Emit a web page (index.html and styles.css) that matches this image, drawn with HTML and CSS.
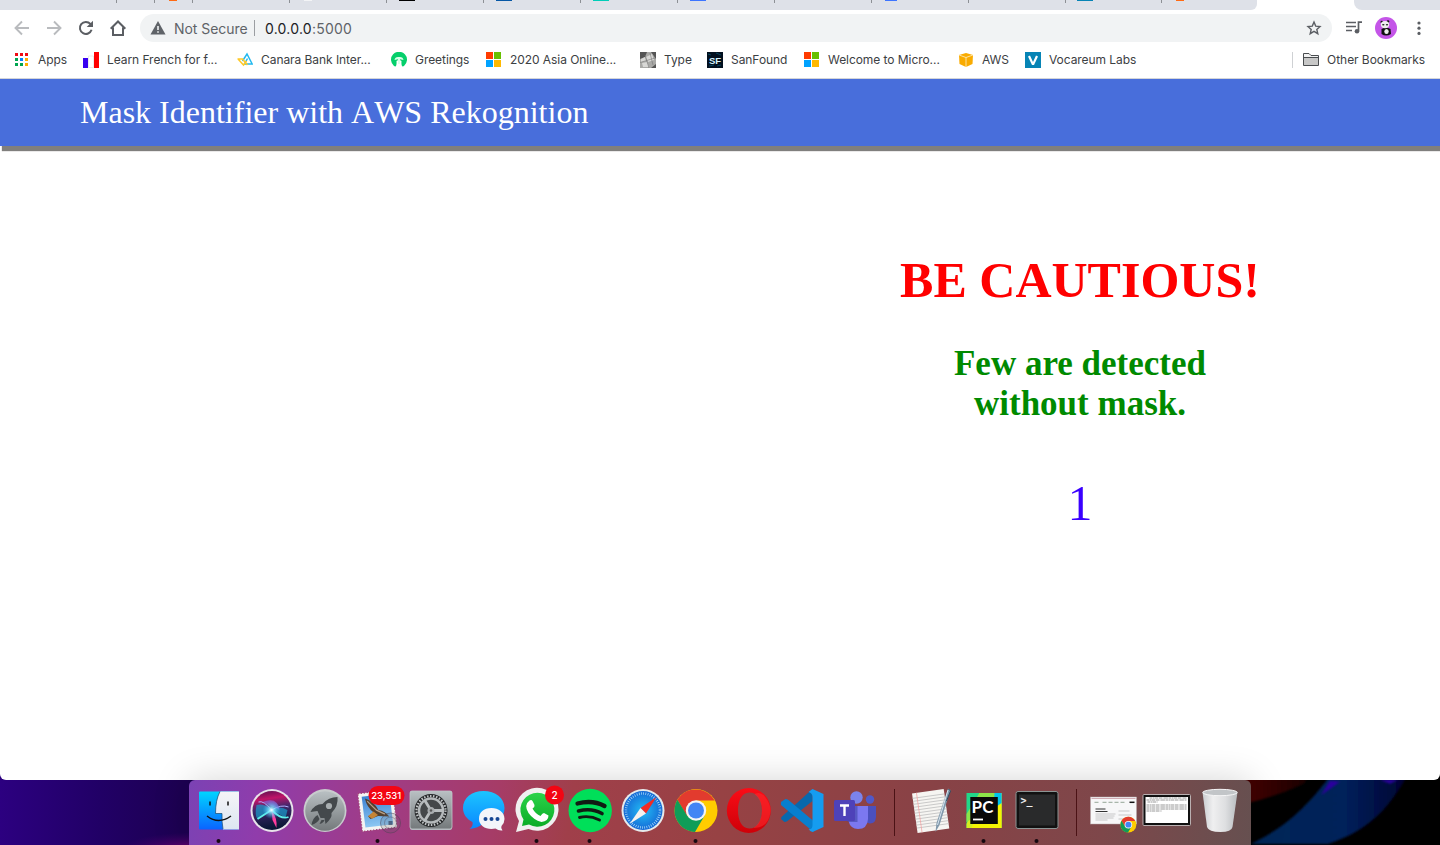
FILE: index.html
```html
<!DOCTYPE html>
<html lang="en">
<head>
<meta charset="utf-8">
<title>Mask Identifier</title>
<link rel="stylesheet" href="styles.css">
</head>
<body>
<svg class="wallpaper" viewBox="0 0 1440 75" preserveAspectRatio="none">
  <defs>
    <linearGradient id="wl" x1="0" x2="1"><stop offset="0" stop-color="#2c0080"/><stop offset=".25" stop-color="#210066"/><stop offset=".45" stop-color="#1d0052"/><stop offset="1" stop-color="#1d0048"/></linearGradient>
    <radialGradient id="wm"><stop offset="0" stop-color="#820078" stop-opacity=".9"/><stop offset="1" stop-color="#500070" stop-opacity="0"/></radialGradient>
    <linearGradient id="wr" x1="0" x2="1"><stop offset="0" stop-color="#4a0000"/><stop offset="1" stop-color="#180000"/></linearGradient>
    <linearGradient id="wb" x1="0" x2="1" y1="0" y2="0"><stop offset="0" stop-color="#002858"/><stop offset=".6" stop-color="#00205a"/><stop offset="1" stop-color="#020030"/></linearGradient>
    <filter id="soft"><feGaussianBlur stdDeviation="1.2"/></filter>
  </defs>
  <rect width="1440" height="75"/>
  <rect width="400" height="75" fill="url(#wl)"/>
  <ellipse cx="195" cy="80" rx="75" ry="18" fill="url(#wm)"/>
  <path d="M1240 0H1310L1304 12Q1275 26 1240 34z" fill="url(#wr)" filter="url(#soft)"/>
  <path d="M1333 0C1308 35 1288 55 1251 74H1328C1370 60 1392 34 1409 0z" fill="url(#wb)" filter="url(#soft)"/>
  <path d="M1330 9L1321 24L1340 10zM1380 8L1390 12L1398 8z" fill="#2c009e" filter="url(#soft)"/>
</svg>
<div class="window">
  <div class="tabs">
    <span class="tab t117"></span><span class="tab t38"></span><span class="tab t38"><i class="fav f-orange"></i></span>
    <span class="tab"></span><span class="tab"><i class="fav f-white"></i></span><span class="tab"><i class="fav f-black"></i></span><span class="tab"><i class="fav f-navy"></i></span>
    <span class="tab"><i class="fav f-teal"></i></span><span class="tab"><i class="fav f-blue"></i></span><span class="tab"></span>
    <span class="tab"><i class="fav f-blue f-small"></i></span><span class="tab"></span>
    <span class="tab t96"><i class="fav f-cyan"></i></span><span class="tab t95"><i class="fav f-orange"></i></span>
    <span class="active"></span><span class="rest"></span>
  </div>
  <div class="toolbar">
    <svg class="tool" viewBox="0 0 16 16" fill="none" stroke="#b9bbbe" stroke-width="1.9"><path d="M15 8H2M8 1.5L1.5 8L8 14.5"/></svg>
    <svg class="tool" viewBox="0 0 16 16" fill="none" stroke="#b9bbbe" stroke-width="1.9"><path d="M1 8H14M8 1.5L14.500 8L8 14.500"/></svg>
    <svg class="tool" viewBox="0 0 16 16"><path d="M13.6 9.800A6 6 0 1 1 12.4 3.900L14 5.500" fill="none" stroke="#5b5e63" stroke-width="2"/><path d="M15 .7V7H8.700z" fill="#5b5e63"/></svg>
    <svg class="tool" viewBox="0 0 16 16" fill="none" stroke="#5b5e63" stroke-width="2"><path d="M.7 8.700L8 1.500L15.300 8.700M3 7.500V15H13V7.500"/></svg>
    <div class="omnibox">
      <svg class="warn" viewBox="0 0 16 14"><path d="M8 0L15.500 13.500H.5z" fill="#5f6368"/><path d="M7.200 5h1.600v4H7.200zM7.200 10.200h1.600v1.600H7.200z" fill="#f1f3f4"/></svg>
      <span class="insecure">Not Secure</span><span class="bar"></span><span class="url">0.0.0.0<em>:5000</em></span>
      <svg class="star" viewBox="0 0 16 16" fill="none" stroke="#5b5e63" stroke-width="1.400"><path d="M8 2L9.700 6.100L14 6.500L10.800 9.400L11.800 13.700L8 11.400L4.200 13.700L5.200 9.400L2 6.500L6.300 6.100z"/></svg>
    </div>
    <svg class="media" viewBox="0 0 16 14"><path d="M0 1.500h10M0 5.500h10M0 9.500h6" stroke="#5b5e63" stroke-width="1.600"/><path d="M12.500 10V1.200H16" fill="none" stroke="#5b5e63" stroke-width="1.700"/><circle cx="11" cy="10.200" r="2.300" fill="#5b5e63"/></svg>
    <svg class="avatar" viewBox="0 0 22 22"><circle cx="11" cy="11" r="11" fill="#c455e8"/><circle cx="6.800" cy="5" r="1.300" fill="#111"/><circle cx="13" cy="4.600" r="1.300" fill="#111"/><path d="M6.500 12Q11 9 15.500 12L16 17Q11 20 6.500 17z" fill="#111"/><ellipse cx="10" cy="7.600" rx="4.200" ry="3.600" fill="#eee"/><ellipse cx="8.300" cy="7.800" rx="1.200" ry=".8" fill="#222"/><ellipse cx="12" cy="7.800" rx="1.200" ry=".8" fill="#222"/><ellipse cx="11.500" cy="14.500" rx="2.200" ry="2.600" fill="#eee"/></svg>
    <svg class="dots" viewBox="0 0 4 14" fill="#5b5e63"><circle cx="2" cy="2" r="1.600"/><circle cx="2" cy="7.200" r="1.600"/><circle cx="2" cy="12.400" r="1.600"/></svg>
  </div>
  <div class="bookmarks">
    <div class="bm w69"><svg viewBox="0 0 16 16"><path d="M1 1h3v3H1zM6 1h3v3H6zM11 1h3v3h-3z" fill="#f00a14"/><path d="M1 6h3v3H1zM1 11h3v3H1z" fill="#00a550"/><path d="M6 6h3v3H6z" fill="#0082ff"/><path d="M11 6h3v3h-3zM11 11h3v3h-3z" fill="#ffac00"/><path d="M6 11h3v3H6z" fill="#00a550"/></svg><span>Apps</span></div>
    <div class="bm"><svg viewBox="0 0 16 16"><path d="M0 6h5v10H0z" fill="#3700f0"/><path d="M5.500 4h5v11.500h-5z" fill="#fff" stroke="#ddd" stroke-width=".6"/><path d="M11 0h5v16h-5z" fill="#f00"/></svg><span>Learn French for f...</span></div>
    <div class="bm"><svg viewBox="0 0 16 16" fill="none" stroke-width="1.500"><path d="M5.500 9L10 2L15.200 12H7.500L10.500 6.500" stroke="#22b9ef"/><path d="M.5 7H5.500L10.500 13M1 7L6.500 13L9.500 9" stroke="#ffc928"/></svg><span>Canara Bank Inter...</span></div>
    <div class="bm w95"><svg viewBox="0 0 16 16"><path d="M3 14A8 8 0 1 1 13 14Q10 16 10.500 9Q8 7 5.500 9Q6 16 3 14z" fill="#05cf6b"/><path d="M3.500 8Q4 4.500 8 5Q12 4.500 12.500 8L9 7.300L8.800 12H7.200L7 7.300z" fill="#d9ffe9"/></svg><span>Greetings</span></div>
    <div class="bm"><svg viewBox="0 0 16 16"><path d="M0 0h7v7H0z" fill="#ff3b00"/><path d="M8 0h7v7H8z" fill="#68c000"/><path d="M0 8h7v7H0z" fill="#00a2ff"/><path d="M8 8h7v7H8z" fill="#ffb900"/></svg><span>2020 Asia Online...</span></div>
    <div class="bm w67"><svg viewBox="0 0 16 16"><rect width="16" height="16" fill="#a9a9a7"/><path d="M0 0H7L5 5L0 7zM11 0H16V7zM16 12V16H11z" fill="#555"/><path d="M1 7L5 5L6 9L1 10zM6 5L12 2L14 8L8 10zM2 11L7 10L9 15H3z" fill="#d8d8d6"/><path d="M0 10.500L15 6M5 3L9 16M10 1L13 13" stroke="#777" stroke-width=".6"/></svg><span>Type</span></div>
    <div class="bm w97"><svg viewBox="0 0 16 16"><rect width="16" height="16" fill="#02101f"/><path d="M1 2l3 1M9 1l5 2M2 14l5-1M10 14l4-1" stroke="#07506d" stroke-width=".8"/><text x="8" y="11.600" text-anchor="middle" class="sf">SF</text></svg><span>SanFound</span></div>
    <div class="bm"><svg viewBox="0 0 16 16"><path d="M0 0h7v7H0z" fill="#ff3b00"/><path d="M8 0h7v7H8z" fill="#68c000"/><path d="M0 8h7v7H0z" fill="#00a2ff"/><path d="M8 8h7v7H8z" fill="#ffb900"/></svg><span>Welcome to Micro...</span></div>
    <div class="bm w67"><svg viewBox="0 0 16 16"><path d="M1 3L8 1L15 3L14.500 12L8 15L1.500 12z" fill="#f9ab00"/><path d="M1 3L8 5.500L15 3M8 5.500V15" fill="none" stroke="#fff0c8" stroke-width=".8"/></svg><span>AWS</span></div>
    <div class="bm"><svg viewBox="0 0 16 16"><rect width="16" height="16" fill="#0784b5"/><path d="M3 4.500L5 3.500L8 10L11 3.500L13 4.500L9 13H7z" fill="#fff"/></svg><span>Vocareum Labs</span></div>
    <div class="bm other"><svg viewBox="0 0 16 16"><path d="M.5 13.500V1.500H6L8 3.500H15.500V13.500z" fill="#f2f2f2" stroke="#4a4d50"/><path d="M1 6H15V13H1z" fill="#c7c7c7"/><path d="M.5 5.500H15.500" stroke="#4a4d50"/></svg><span>Other Bookmarks</span></div>
  </div>
  <header class="banner">Mask Identifier with AWS Rekognition</header>
  <main class="page">
    <section class="result">
      <h1>BE CAUTIOUS!</h1>
      <h2>Few are detected<br>without mask.</h2>
      <p>1</p>
    </section>
  </main>
</div>
<div class="dock">
  <svg class="app" viewBox="-26.5 0 53 65">
    <defs><linearGradient id="fb" x2="0" y2="1"><stop stop-color="#00d5ff"/><stop offset="1" stop-color="#0a64ff"/></linearGradient><linearGradient id="fw" x2="0" y2="1"><stop stop-color="#f5f5f7"/><stop offset="1" stop-color="#dce6f2"/></linearGradient></defs>
    <rect x="-19.500" y="11.500" width="40" height="38" rx="1" fill="url(#fb)"/><path d="M1.500 11.500H20.500V49.500H4.500Q3.200 42 3.500 33.500H-3Q-3 20 1.500 11.500z" fill="url(#fw)"/>
    <path d="M1.500 11.500Q-3 20-3 33.500H3.500Q3.200 42 4.500 49" fill="none" stroke="#16476e" stroke-width=".7"/><path d="M-8.500 21.500v4M9.500 21.500v4" stroke="#111" stroke-width="1.500"/><path d="M-11.500 36Q0 45 12.500 36" fill="none" stroke="#111" stroke-width="1.500"/><circle class="run" cy="61" r="2"/>
  </svg>
  <svg class="app" viewBox="-26.5 0 53 65">
    <defs><radialGradient id="sc"><stop stop-color="#fff"/><stop offset=".3" stop-color="#8ceaff" stop-opacity=".8"/><stop offset="1" stop-color="#3bf" stop-opacity="0"/></radialGradient><linearGradient id="sb" x2=".15" y2="1"><stop offset="0" stop-color="#50104f"/><stop offset=".25" stop-color="#c01468"/><stop offset=".5" stop-color="#40286c"/><stop offset="1" stop-color="#0a1836"/></linearGradient></defs>
    <circle cx=".5" cy="30.500" r="21.500" fill="#e8e3ea"/><circle cx=".5" cy="30.500" r="19.500" fill="url(#sb)"/>
    <path d="M0 30Q-8 23-15 25Q-17 36-14 39zM0 30Q8 25 16 30L14 38Q8 34 0 30" fill="#16a8d4" opacity=".65"/><path d="M0 30L-14 39M0 30Q10 40 17 37" stroke="#5ff0e8" stroke-width="1.800" fill="none"/><path d="M0 30Q-8 20-13 22M0 30Q10 24 17 27" stroke="#b6b0ff" stroke-width="1" fill="none"/><path d="M0 30Q6 38 5 48L1 40z" fill="#ff3d9c"/><path d="M-9 22Q6 16 8 30" fill="#8a72e8" opacity=".6"/><circle cx="0" cy="30" r="9" fill="url(#sc)"/>
  </svg>
  <svg class="app" viewBox="-26.5 0 53 65">
    <defs><linearGradient id="gr" x2="0" y2="1"><stop stop-color="#b9c0c3"/><stop offset="1" stop-color="#74797b"/></linearGradient></defs>
    <circle cx=".5" cy="30.500" r="21.500" fill="#c8cccd"/><circle cx=".5" cy="31" r="19.800" fill="url(#gr)"/>
    <path d="M13 17Q4 17-2 24Q-10 24-14 32L-7 31L-4 38L0 38L1 44Q8 38 7 33Q14 26 13 17z" fill="#44494c"/><circle cx="4.500" cy="26" r="3.100" fill="#a8aeb0"/><path d="M-7 35Q-12 38-13 45Q-7 43-5 39zM-3 40L-5 44Q-1 43 0 40z" fill="#44494c"/>
  </svg>
  <svg class="app" viewBox="-26.5 0 53 65">
    <defs><linearGradient id="ml" x2="0" y2="1"><stop stop-color="#3c82d2"/><stop offset="1" stop-color="#8dc7f2"/></linearGradient></defs>
    <g transform="rotate(-7 0 31)"><rect x="-17.500" y="11.500" width="35" height="38" fill="#f4f4f2"/><rect x="-17.500" y="11.500" width="35" height="38" fill="none" stroke="#a34073" stroke-width="1.200" stroke-dasharray="1.300 1.700"/><rect x="-14" y="15" width="28" height="31" fill="url(#ml)"/><path d="M-11 17Q-3 20 1 30Q8 32 11 38Q5 37 0 36L-8 38L-10 35L-4 32Q-10 26-11 17z" fill="#54402e"/><path d="M-10 35L-4 31L0 35L-6 38z" fill="#c58435"/><path d="M-9 20L-1 30L7 35" stroke="#b8a18a" stroke-width="1.200" fill="none"/></g>
    <circle cx="13" cy="43" r="10" fill="#5f5866" fill-opacity=".2" stroke="#4d4354" stroke-opacity=".5"/><circle cx="13" cy="43" r="6" fill="none" stroke="#4d4354" stroke-opacity=".4"/><rect x="11" y="41" width="4" height="4" fill="#344463" opacity=".7"/>
    <rect x="-9" y="6" width="36" height="19" rx="9.500" fill="#f30513"/><text x="8.700" y="19" text-anchor="middle" class="badge mail">23,531</text><circle class="run" cy="61" r="2"/>
  </svg>
  <svg class="app" viewBox="-26.5 0 53 65">
    <rect x="-20.500" y="11" width="42" height="39" rx="2" fill="#adb3b7"/><rect x="-20.500" y="11" width="42" height="38" rx="2" fill="url(#gr)" stroke="#c2c7ca" stroke-width=".8"/>
    <circle cx=".5" cy="30.500" r="16.500" fill="#26282a"/><circle cx=".5" cy="30.500" r="14.500" fill="none" stroke="#c1c4c6" stroke-width="2.200" stroke-dasharray="1.500 1.540"/><circle cx=".5" cy="30.500" r="12" fill="#45484a" stroke="#b4b8ba" stroke-width="2.500"/><path d="M.5 30.500L-6 20M.5 30.500H13M.5 30.500L-6 41" stroke="#b9bdbf" stroke-width="2.800"/><circle cx=".5" cy="30.500" r="3.500" fill="#a9adaf"/><circle cx=".5" cy="30.500" r="1.300" fill="#555"/>
  </svg>
  <svg class="app" viewBox="-26.5 0 53 65">
    <defs><linearGradient id="ms" x2="0" y2="1"><stop stop-color="#1cc5ff"/><stop offset="1" stop-color="#0a87ff"/></linearGradient></defs>
    <path d="M0 11C-12 11-20.500 18-20.500 28C-20.500 34-17 39-11 42Q-10 46-14 49Q-5 48-1 44C13 45 21 38 21 28C21 18 12 11 0 11z" fill="url(#ms)"/><path d="M8 28C0 28-4.500 32-4.500 39C-4.500 45 1 49 8 49L12 48.500Q15 51 19 50.500Q17 48 18 46Q21 43 21 39C21 32 15 28 8 28z" fill="#f3f5fa"/><circle cx="2" cy="39" r="2" fill="#174793"/><circle cx="8" cy="39" r="2" fill="#174793"/><circle cx="14" cy="39" r="2" fill="#174793"/>
  </svg>
  <svg class="app" viewBox="-26.5 0 53 65">
    <defs><linearGradient id="wa" x2="0" y2="1"><stop stop-color="#2bd34a"/><stop offset="1" stop-color="#0aac26"/></linearGradient></defs>
    <path d="M-20.500 52L-17.500 41A21.500 21.500 0 1 1-8 49z" fill="#f0f0f0"/><path d="M-14.500 46L-13 39.500A17 17 0 1 1-7.500 44.500z" fill="url(#wa)"/><path d="M-7 20.500Q-5 19.500-4 21L-2 25Q-1.500 27-4 28.500Q-1 34 4 36Q6 33 7.500 33L12 35.500Q12 41 5 42Q-3 40-8 33Q-13 25-7 20.500z" fill="#fff"/>
    <circle cx="18" cy="15" r="9.500" fill="#f30513"/><text x="18" y="18.800" text-anchor="middle" class="badge">2</text><circle class="run" cy="61" r="2"/>
  </svg>
  <svg class="app" viewBox="-26.5 0 53 65">
    <circle cx=".7" cy="30.500" r="21.700" fill="#00df59"/><g fill="none" stroke="#101c13" stroke-linecap="round"><path d="M-12 23.500Q3 19.500 15 26" stroke-width="4.300"/><path d="M-11 31Q2 27.500 12.500 33.500" stroke-width="3.600"/><path d="M-10 37.500Q0 35 10 40" stroke-width="2.900"/></g><circle class="run" cy="61" r="2"/>
  </svg>
  <svg class="app" viewBox="-26.5 0 53 65">
    <defs><radialGradient id="sa"><stop stop-color="#22bdf5"/><stop offset="1" stop-color="#1569d6"/></radialGradient></defs>
    <circle cx=".5" cy="30.500" r="21.500" fill="#e6eaec"/><circle cx=".5" cy="30.500" r="19.500" fill="url(#sa)"/><circle cx=".5" cy="30.500" r="17" fill="none" stroke="#b5e0fa" stroke-width="2.500" stroke-dasharray=".7 1.520"/><path d="M14 17L-2 28L3.500 33.500z" fill="#f22c25"/><path d="M-13 44L-2 28L3.500 33.500z" fill="#f4f1ef"/>
  </svg>
  <svg class="app" viewBox="-26.5 0 53 65">
    <g id="chrome"><circle cx=".5" cy="30.500" r="21.500" fill="#fc0"/><path d="M-18.100 19.750A21.500 21.500 0 0 1 19.100 20.500H.5L-8.700 36z" fill="#e23b2e"/><path d="M-18.100 19.750A21.500 21.500 0 0 0-.5 52L9.200 35.500L.5 40L-8.200 36z" fill="#0f9d58"/><circle cx=".5" cy="30.500" r="10.200" fill="#f4f4f4"/><circle cx=".5" cy="30.500" r="8" fill="#4285f4"/></g><circle class="run" cy="61" r="2"/>
  </svg>
  <svg class="app" viewBox="-26.5 0 53 65">
    <defs><linearGradient id="op" x2="0" y2="1"><stop stop-color="#fa0d17"/><stop offset="1" stop-color="#ce0008"/></linearGradient></defs>
    <path fill-rule="evenodd" d="M.3 8A22 22.500 0 1 0 .3 53A22 22.500 0 1 0 .3 8M.8 12.500C9 12.500 13.500 20 13.500 30.500C13.500 41 9 48.500 .8 48.500C-7 48.500-10.500 40-10.500 30.500C-10.500 21-7 12.500 .8 12.500z" fill="url(#op)"/><path d="M6 14Q12 11 16 16Q23 25 22 32Q20 48 5 48Q13.500 42 13.500 30.500Q13.500 20 6 14z" fill="#ff3032" opacity=".5"/>
  </svg>
  <svg class="app" viewBox="-26.5 0 53 65">
    <path d="M-20.500 39L-17 42Q-15.500 42-14 41L11 21V9L-20 37z" fill="#0868ad"/><path d="M-20.500 22L-16 19Q-14.500 19-13 20L12 41V52L-20.500 25z" fill="#087fce"/><path d="M11 9L22 14V47L11 52Q9 52 7 49Q11 50 11 45V17Q11 13 7 12z" fill="#159cf0"/>
  </svg>
  <svg class="app" viewBox="-26.5 0 53 65">
    <circle cx="15.500" cy="19.500" r="4.200" fill="#5059c9"/><circle cx="2" cy="17.500" r="6.200" fill="#7b83eb"/><path d="M12 26H21.500V37Q21 44 15 43.500L11 42z" fill="#4b50bd"/><path d="M-5 26H13.500V39Q13 49 3.500 49Q-4 49-6 41z" fill="#7b78f0"/><path d="M-5 26H3V42H-7z" fill="#4144a6" opacity=".6"/><rect x="-20.500" y="20" width="21" height="21" rx="1.500" fill="#4e42b9"/><path d="M-14.500 25.500H-5.500M-10 25.500V36" stroke="#fff" stroke-width="2.400"/>
  </svg>
  <span class="split"></span>
  <svg class="app" viewBox="-26.5 0 53 65">
    <g transform="rotate(-8 0 30)"><rect x="-16" y="11" width="32" height="40" fill="#f6f5f2"/><path d="M-16 16h32M-16 19h32M-16 22h32M-16 25h32M-16 28h32M-16 31h32M-16 34h32M-16 37h32M-16 40h32M-16 43h32M-16 46h32" stroke="#c1c1c1" stroke-width=".8"/><path d="M-11.500 11v40" stroke="#f3a0a0" stroke-width=".7"/></g><path d="M17.500 8.500L20 10L9 45L5 52L6 43z" fill="#8098ab"/><path d="M17.500 10L7 45" stroke="#d7e4ef"/><path d="M18 9L20 11L16 21" stroke="#334b60" fill="none"/>
  </svg>
  <svg class="app" viewBox="-26.5 0 53 65">
    <rect x="-17" y="13" width="35" height="35" fill="#21d789"/><path d="M-4 13H18V48H-17V44z" fill="#d6ee20"/><path d="M-4 13H12V24L-17 42V34z" fill="#8ce449"/><path d="M11 13H18V25L10 28z" fill="#00c4ee"/><path d="M11 28L18 23V48H-12L-10 43z" fill="#f5f304"/><rect x="-13.200" y="17" width="27.500" height="27" fill="#090909"/><text x="-12" y="32.800" class="pc">PC</text><path d="M-10.500 39.500H-.5" stroke="#fff" stroke-width="1.800"/><circle class="run" cy="61" r="2"/>
  </svg>
  <svg class="app" viewBox="-26.5 0 53 65">
    <rect x="-20.500" y="11.500" width="42" height="37" rx="2" fill="#111" stroke="#8b9594"/><rect x="-17.500" y="14.500" width="36" height="31" fill="#292a2b"/><text x="-16" y="24" class="term">&gt;_</text><circle class="run" cy="61" r="2"/>
  </svg>
  <span class="split s2"></span>
  <svg class="app" viewBox="-26.5 0 53 65">
    <rect x="-23" y="17" width="46" height="27" fill="#f7f7f8" stroke="#b8a9ac" stroke-width=".5"/><path d="M-22 18.500H22" stroke="#d1adb5"/><path d="M-19 22.300h6M-11 22.300h22" stroke="#94a596" stroke-dasharray="4 2"/><path d="M16 22.300h5" stroke="#111" stroke-width="1.500"/><path d="M-18 29h10M-18 31.500h12" stroke="#333"/><path d="M-18 34h20M-18 36h19M-18 38h18M-18 40h12M5 31h11M5 35h13M5 39h7" stroke="#bbb" stroke-width=".8"/><g transform="translate(14.700 33) scale(.37)"><use href="#chrome" y="1"/></g>
  </svg>
  <svg class="app" viewBox="-26.5 0 53 65">
    <rect x="-23.500" y="14.500" width="47.500" height="31" rx="1" fill="#111" stroke="#bab0b1"/><rect x="-21" y="17" width="42.500" height="26" fill="#fff"/><path d="M-17 18h37M-20 20h40M-19 22h10M-20 25h40M-20 27h40M-20 29h40M-20 31h15" stroke="#999" stroke-width="1.100" stroke-dasharray="3 .5 1 .4 4 .6"/>
  </svg>
  <svg class="app" viewBox="-26.5 0 53 65">
    <defs><linearGradient id="tr"><stop stop-color="#c9cccf"/><stop offset=".3" stop-color="#efeff0"/><stop offset=".65" stop-color="#dedfe1"/><stop offset="1" stop-color="#b9bcbf"/></linearGradient></defs>
    <path d="M-17 12L-12.500 47Q-11 52 1 52Q12 52 13 47L18 12z" fill="url(#tr)"/><ellipse cx=".5" cy="12.500" rx="17.300" ry="3.200" fill="#c2c5c8" stroke="#f6f6f7"/>
  </svg>
</div>
</body>
</html>
```
FILE: styles.css
```css
* { box-sizing: border-box; }
body { margin: 0; height: 845px; overflow: hidden; background: #000; display: flex; flex-direction: column; align-items: flex-start; font-family: Inter, "Liberation Sans", sans-serif; }
.wallpaper { position: absolute; left: 0; bottom: 0; width: 1440px; height: 73px; z-index: -1; }
.window { width: 1440px; height: 780px; flex: none; background: #fff; border-radius: 0 0 6px 6px; overflow: hidden; }

.tabs { display: flex; height: 10px; background: #fff; }
.tab { width: 97px; height: 10px; background: linear-gradient(#8d9095, #8d9095) right top / 1px 3px no-repeat, #dee1e8; padding-left: 12px; flex: none; }
.t117 { width: 117px; }
.t38 { width: 38px; }
.t96 { width: 96px; padding-left: 11px; }
.t95 { width: 95px; background: #dee1e8; border-bottom-right-radius: 6px; }
.active { width: 97px; }
.rest { flex: 1; background: #dee1e8; border-bottom-left-radius: 8px; }
.fav { display: block; width: 16px; height: 1px; }
.f-orange { width: 8px; margin-left: 2px; background: #ff6a13; }
.f-white { width: 8px; margin-left: 2px; background: #f3f4f6; }
.f-black { background: #000; }
.f-navy { background: #0657a5; }
.f-teal { background: #00cdb8; }
.f-blue { background: #3d75ff; }
.f-small { width: 12px; margin-left: 1px; }
.f-cyan { background: #0784b5; }

.toolbar { display: flex; align-items: center; height: 36px; padding: 0 19px 0 14px; }
.tool { width: 16px; height: 16px; margin-right: 16px; flex: none; }
.tool:nth-child(4) { margin-right: 14px; }
.omnibox { display: flex; align-items: center; width: 1192px; height: 28px; flex: none; border-radius: 14px; background: #f1f3f4; padding: 0 10px; font-size: 14px; color: #5f6368; }
.warn { width: 16px; height: 14px; margin-right: 8px; }
.insecure { width: 73px; white-space: nowrap; letter-spacing: -.05px; }
.bar { width: 1px; height: 16px; margin: 0 10px 0 7px; background: #9b9ea2; }
.url { color: #202124; white-space: nowrap; letter-spacing: .23px; }
.url em { font-style: normal; color: #5f6368; }
.star { width: 16px; height: 16px; margin-left: auto; }
.media { width: 16px; height: 14px; margin: 0 13px 0 14px; flex: none; }
.avatar { width: 22px; height: 22px; margin-right: 20px; flex: none; }
.dots { width: 4px; height: 14px; flex: none; }

.bookmarks { display: flex; align-items: center; height: 33px; padding: 0 15px 5px 14px; border-bottom: 1px solid #d3d5d9; }
.bm { display: flex; align-items: center; gap: 8px; width: 154px; height: 16px; flex: none; font-size: 12px; letter-spacing: -.06px; color: #3c4043; white-space: nowrap; }
.bm svg { width: 16px; height: 16px; flex: none; }
.w69 { width: 69px; }
.w95 { width: 95px; }
.w67 { width: 67px; }
.w97 { width: 97px; }
.other { width: auto; margin-left: auto; border-left: 1px solid #cfd1d4; padding-left: 10px; }
.sf { font: bold 9.5px "Liberation Sans", sans-serif; letter-spacing: 0; fill: #d9f5ff; }

.banner { height: 67px; padding-left: 80px; line-height: 67px; background: #486edb; color: #fff; font-family: "Liberation Serif", serif; font-size: 32px; font-kerning: none; box-shadow: 2px 5px 1px #807f7d; }
.page { display: flex; justify-content: flex-end; font-family: "Liberation Serif", serif; }
.result { width: 720px; padding-top: 105px; text-align: center; }
.result h1 { margin: 0; font-size: 50px; line-height: 58px; color: #f00; }
.result h2 { margin: 35px 0 0; font-size: 35px; line-height: 40px; color: #008a00; }
.result p { margin: 50px 0 0; font-size: 50px; line-height: 58px; color: #3a00ff; }

.dock { display: flex; width: 1062px; height: 65px; flex: none; margin-left: 189px; padding-left: 3px; border-radius: 6px 6px 0 0; background: linear-gradient(98deg, #7b42b4 0, #903cab 7%, #a03c86 18%, #a63c67 29%, #a03f4a 36%, #974244 50%, #884246 70%, #7e474a 86%, #665050 100%); box-shadow: 0 0 36px rgba(0, 0, 0, .17); }
.app { width: 53px; height: 65px; flex: none; overflow: visible; }
.run { fill: #160810; }
.split { width: 1px; height: 47px; margin: 9px 9px 0 13px; background: #4b1215; flex: none; }
.s2 { margin: 9px 10px 0 13px; }
.badge { font: 500 10px Inter, sans-serif; fill: #fff; }
.mail { font-size: 9.5px; }
.pc { font: bold 17px Lato, sans-serif; fill: #fff; letter-spacing: .2px; }
.term { font: bold 10px "DejaVu Sans Mono", monospace; fill: #eee; }
```
